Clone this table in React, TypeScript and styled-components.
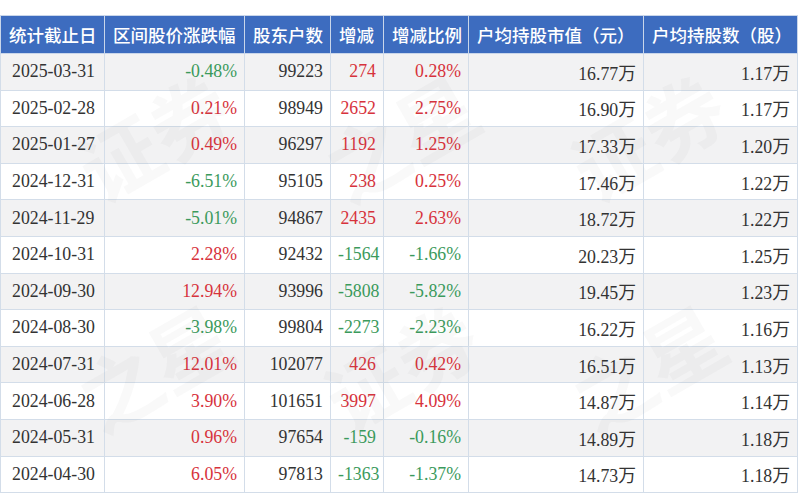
import React from "react";
import styled, { createGlobalStyle } from "styled-components";

type Row = {
  date: string;
  range: string;
  holders: string;
  change: string;
  ratio: string;
  value: string;
  shares: string;
};

const rows: Row[] = [
  { date: "2025-03-31", range: "-0.48%", holders: "99223", change: "274", ratio: "0.28%", value: "16.77万", shares: "1.17万" },
  { date: "2025-02-28", range: "0.21%", holders: "98949", change: "2652", ratio: "2.75%", value: "16.90万", shares: "1.17万" },
  { date: "2025-01-27", range: "0.49%", holders: "96297", change: "1192", ratio: "1.25%", value: "17.33万", shares: "1.20万" },
  { date: "2024-12-31", range: "-6.51%", holders: "95105", change: "238", ratio: "0.25%", value: "17.46万", shares: "1.22万" },
  { date: "2024-11-29", range: "-5.01%", holders: "94867", change: "2435", ratio: "2.63%", value: "18.72万", shares: "1.22万" },
  { date: "2024-10-31", range: "2.28%", holders: "92432", change: "-1564", ratio: "-1.66%", value: "20.23万", shares: "1.25万" },
  { date: "2024-09-30", range: "12.94%", holders: "93996", change: "-5808", ratio: "-5.82%", value: "19.45万", shares: "1.23万" },
  { date: "2024-08-30", range: "-3.98%", holders: "99804", change: "-2273", ratio: "-2.23%", value: "16.22万", shares: "1.16万" },
  { date: "2024-07-31", range: "12.01%", holders: "102077", change: "426", ratio: "0.42%", value: "16.51万", shares: "1.13万" },
  { date: "2024-06-28", range: "3.90%", holders: "101651", change: "3997", ratio: "4.09%", value: "14.87万", shares: "1.14万" },
  { date: "2024-05-31", range: "0.96%", holders: "97654", change: "-159", ratio: "-0.16%", value: "14.89万", shares: "1.18万" },
  { date: "2024-04-30", range: "6.05%", holders: "97813", change: "-1363", ratio: "-1.37%", value: "14.73万", shares: "1.18万" },
];

const headers = [
  "统计截止日",
  "区间股价涨跌幅",
  "股东户数",
  "增减",
  "增减比例",
  "户均持股市值（元）",
  "户均持股数（股）",
];

const widths = [104, 140, 86, 53, 85, 175, 154];

const tone = (v: string) => (v.startsWith("-") ? "down" : "up");

const GlobalStyle = createGlobalStyle`
  body {
    margin: 0;
    background: #ffffff;
  }
`;

const Page = styled.div`
  position: relative;
  width: 800px;
  height: 500px;
  overflow: hidden;
  padding-top: 15px;
  box-sizing: border-box;
`;

const Table = styled.table`
  width: 797px;
  border-collapse: collapse;
  table-layout: fixed;
  border: 1px solid #d3dde9;
`;

const Th = styled.th`
  height: 37px;
  padding: 0 6px 0 8px;
  background: #3d6cbf;
  color: #ffffff;
  font-family: "Noto Sans CJK SC", "Noto Sans", sans-serif;
  font-size: 17.5px;
  font-weight: 500;
  text-align: left;
  white-space: nowrap;
  border: 1px solid #c9d6ea;
  overflow: hidden;
`;

const Tr = styled.tr<{ $odd: boolean }>`
  background: ${({ $odd }) => ($odd ? "#f2f2f3" : "#ffffff")};
`;

const Td = styled.td<{ $tone?: "up" | "down"; $left?: boolean }>`
  height: 35.6px;
  padding: 0 7px 0 ${({ $left }) => ($left ? "11px" : "7px")};
  font-family: "Liberation Serif", "Noto Sans CJK SC", serif;
  font-size: 17.8px;
  color: ${({ $tone }) =>
    $tone === "up" ? "#d7323c" : $tone === "down" ? "#3b9a5c" : "#333333"};
  text-align: ${({ $left }) => ($left ? "left" : "right")};
  white-space: nowrap;
  border: 1px solid #d3dde9;
`;

const Watermark = styled.div`
  position: absolute;
  inset: 20px 30px;
  pointer-events: none;
  display: grid;
  grid-template-columns: repeat(3, 1fr);
  grid-template-rows: repeat(2, 1fr);
  align-items: center;
  justify-items: center;
`;

const Mark = styled.span`
  font-family: "Noto Sans CJK SC", sans-serif;
  font-size: 80px;
  font-weight: 700;
  color: rgba(120, 120, 120, 0.045);
  transform: rotate(-30deg);
  white-space: nowrap;
`;

export default function App() {
  return (
    <Page>
      <GlobalStyle />
      <Table>
        <colgroup>
          {widths.map((w, i) => (
            <col key={i} style={{ width: w }} />
          ))}
        </colgroup>
        <thead>
          <tr>
            {headers.map((h) => (
              <Th key={h}>{h}</Th>
            ))}
          </tr>
        </thead>
        <tbody>
          {rows.map((r, i) => (
            <Tr key={r.date} $odd={i % 2 === 0}>
              <Td $left>{r.date}</Td>
              <Td $tone={tone(r.range)}>{r.range}</Td>
              <Td>{r.holders}</Td>
              <Td $tone={tone(r.change)}>{r.change}</Td>
              <Td $tone={tone(r.ratio)}>{r.ratio}</Td>
              <Td>{r.value}</Td>
              <Td>{r.shares}</Td>
            </Tr>
          ))}
        </tbody>
      </Table>
      <Watermark>
        <Mark>证券</Mark>
        <Mark>之星</Mark>
        <Mark>证券</Mark>
        <Mark>之星</Mark>
        <Mark>证券</Mark>
        <Mark>之星</Mark>
      </Watermark>
    </Page>
  );
}
